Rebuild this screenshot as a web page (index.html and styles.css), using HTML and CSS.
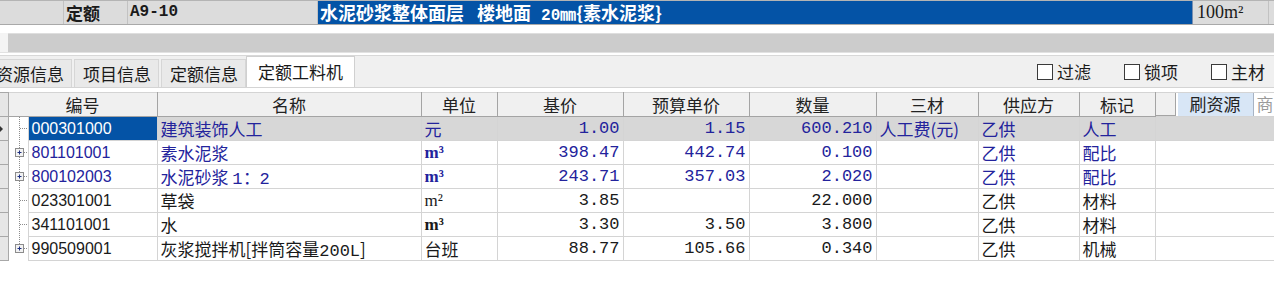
FILE: index.html
```html
<!DOCTYPE html>
<html lang="zh-CN">
<head>
    <meta charset="UTF-8">
    <title>定额工料机</title>
    <link rel="stylesheet" href="styles.css">
</head>
<body>
    <div class="quota-bar">
        <div class="qcell q-blank"></div>
        <div class="qcell q-label">定额</div>
        <div class="qcell q-code">A9-10</div>
        <div class="qcell q-name">水泥砂浆整体面层<span class="gap"></span>楼地面 <span class="mm">20㎜</span>{素水泥浆}</div>
        <div class="qcell q-unit">100m²</div>
        <div class="qcell q-rest"></div>
    </div>
    <div class="scroll-bar">
        <div class="grip"></div>
        <div class="track"></div>
    </div>
    <div class="tab-strip">
        <div class="tabs">
            <div class="tab">资源信息</div>
            <div class="tab">项目信息</div>
            <div class="tab">定额信息</div>
            <div class="tab active">定额工料机</div>
        </div>
        <div class="checks">
            <label class="check"><span class="box"></span>过滤</label>
            <label class="check"><span class="box"></span>锁项</label>
            <label class="check"><span class="box"></span>主材</label>
        </div>
    </div>
    <table class="grid">
        <colgroup>
            <col style="width:8px"><col style="width:20px"><col style="width:129px">
            <col style="width:264px"><col style="width:76px"><col style="width:126px">
            <col style="width:126px"><col style="width:127px"><col style="width:102px">
            <col style="width:101px"><col style="width:76px"><col style="width:119px">
        </colgroup>
        <thead>
            <tr>
                <th class="rh"></th>
                <th colspan="2">编号</th>
                <th>名称</th>
                <th>单位</th>
                <th class="split">基价</th>
                <th>预算单价</th>
                <th>数量</th>
                <th>三材</th>
                <th>供应方</th>
                <th>标记</th>
                <th class="tools">
                    <div class="tool-row">
                        <span class="stub"></span>
                        <span class="brush">刷资源</span>
                        <span class="more">商</span>
                    </div>
                </th>
            </tr>
        </thead>
        <tbody>
            <tr class="current blue">
                <td class="rh"><svg class="mark" width="4" height="8" viewBox="0 0 4 8"><path d="M0 1 L3 4 L0 7 Z" fill="#333"/></svg></td>
                <td class="tree"><svg width="20" height="23" viewBox="0 0 20 23"><path d="M10.5 0 V23 M11 11.5 H20" stroke="#8c8c8c" stroke-dasharray="1 1"/></svg></td>
                <td class="code sel">000301000</td>
                <td>建筑装饰人工</td>
                <td>元</td>
                <td class="num split">1.00</td>
                <td class="num">1.15</td>
                <td class="num">600.210</td>
                <td>人工费(元)</td>
                <td>乙供</td>
                <td>人工</td>
                <td></td>
            </tr>
            <tr class="blue">
                <td class="rh"></td>
                <td class="tree"><svg width="20" height="23" viewBox="0 0 20 23"><path d="M10.5 0 V23 M11 11.5 H20" stroke="#8c8c8c" stroke-dasharray="1 1"/><rect x="6.5" y="7.5" width="8" height="8" fill="#f2f2f2" stroke="#8c8c8c"/><path d="M8.5 11.5 H12.5 M10.5 9.5 V13.5" stroke="#1d2f80"/></svg></td>
                <td class="code">801101001</td>
                <td>素水泥浆</td>
                <td class="unit">m³</td>
                <td class="num split">398.47</td>
                <td class="num">442.74</td>
                <td class="num">0.100</td>
                <td></td>
                <td>乙供</td>
                <td>配比</td>
                <td></td>
            </tr>
            <tr class="blue">
                <td class="rh"></td>
                <td class="tree"><svg width="20" height="23" viewBox="0 0 20 23"><path d="M10.5 0 V23 M11 11.5 H20" stroke="#8c8c8c" stroke-dasharray="1 1"/><rect x="6.5" y="7.5" width="8" height="8" fill="#f2f2f2" stroke="#8c8c8c"/><path d="M8.5 11.5 H12.5 M10.5 9.5 V13.5" stroke="#1d2f80"/></svg></td>
                <td class="code">800102003</td>
                <td>水泥砂浆 <span class="ratio">1：2</span></td>
                <td class="unit">m³</td>
                <td class="num split">243.71</td>
                <td class="num">357.03</td>
                <td class="num">2.020</td>
                <td></td>
                <td>乙供</td>
                <td>配比</td>
                <td></td>
            </tr>
            <tr>
                <td class="rh"></td>
                <td class="tree"><svg width="20" height="23" viewBox="0 0 20 23"><path d="M10.5 0 V23 M11 11.5 H20" stroke="#8c8c8c" stroke-dasharray="1 1"/></svg></td>
                <td class="code">023301001</td>
                <td>草袋</td>
                <td class="unit thin">m²</td>
                <td class="num split">3.85</td>
                <td class="num"></td>
                <td class="num">22.000</td>
                <td></td>
                <td>乙供</td>
                <td>材料</td>
                <td></td>
            </tr>
            <tr>
                <td class="rh"></td>
                <td class="tree"><svg width="20" height="23" viewBox="0 0 20 23"><path d="M10.5 0 V23 M11 11.5 H20" stroke="#8c8c8c" stroke-dasharray="1 1"/></svg></td>
                <td class="code">341101001</td>
                <td>水</td>
                <td class="unit">m³</td>
                <td class="num split">3.30</td>
                <td class="num">3.50</td>
                <td class="num">3.800</td>
                <td></td>
                <td>乙供</td>
                <td>材料</td>
                <td></td>
            </tr>
            <tr>
                <td class="rh"></td>
                <td class="tree"><svg width="20" height="23" viewBox="0 0 20 23"><path d="M10.5 0 V11.5 M11 11.5 H20" stroke="#8c8c8c" stroke-dasharray="1 1"/><rect x="6.5" y="7.5" width="8" height="8" fill="#f2f2f2" stroke="#8c8c8c"/><path d="M8.5 11.5 H12.5 M10.5 9.5 V13.5" stroke="#1d2f80"/></svg></td>
                <td class="code">990509001</td>
                <td>灰浆搅拌机[拌筒容量<span class="ratio">200L</span>]</td>
                <td>台班</td>
                <td class="num split">88.77</td>
                <td class="num">105.66</td>
                <td class="num">0.340</td>
                <td></td>
                <td>乙供</td>
                <td>机械</td>
                <td></td>
            </tr>
        </tbody>
    </table>
</body>
</html>
```

FILE: styles.css
```css
body {
    margin: 0;
    background: #fff;
    font-family: "Noto Sans CJK SC", "Liberation Sans", sans-serif;
    font-size: 17px;
    color: #1a1a1a;
    width: 1274px;
    overflow: hidden;
}

/* quota title bar */
.quota-bar {
    display: flex;
    height: 23px;
    border-top: 1px solid #b4b4b4;
    border-bottom: 1px solid #a9a9a9;
    background: #dcdcdc;
}
.qcell {
    box-sizing: border-box;
    height: 23px;
    line-height: 23px;
    padding-left: 2px;
    border-right: 1px solid #c2c2c2;
    white-space: nowrap;
}
.q-blank { width: 64px; }
.q-label { width: 64px; font-weight: bold; }
.q-code {
    width: 190px;
    font-family: "Liberation Mono", monospace;
    font-weight: bold;
    font-size: 16px;
}
.q-name {
    width: 875px;
    background: #0453a6;
    color: #fff;
    font-weight: bold;
    font-size: 18px;
    border-right-color: #7a8fb0;
}
.q-name .gap { display: inline-block; width: 13px; }
.q-name .mm {
    font-family: "Liberation Mono", monospace;
    font-size: 16px;
    margin-left: 6px;
}
.q-unit { width: 76px; padding-left: 4px; font-family: "Liberation Serif", serif; font-size: 18px; }
.q-rest { flex: 1; border-right: none; }

/* grey scroll strip */
.scroll-bar {
    display: flex;
    margin-top: 8px;
    height: 19px;
    border-bottom: 1px solid #e2e2e2;
}
.grip { width: 8px; background: #f4f4f4; }
.track {
    flex: 1;
    background: #cccccc;
    border-top: 1px solid #dedede;
}

/* tabs + checkboxes */
.tab-strip {
    display: flex;
    justify-content: space-between;
    align-items: flex-end;
    margin-top: 2px;
    height: 31px;
    background: #f0f0f0;
    border-top: 1px solid #d8d8d8;
    border-bottom: 1px solid #d4d4d4;
}
.tabs {
    display: flex;
    align-items: flex-end;
    margin-left: -13px;
}
.tab {
    box-sizing: border-box;
    height: 28px;
    line-height: 27px;
    padding: 0 7px 0 8px;
    margin-right: 2px;
    background: #e9e9e9;
    border: 1px solid #d6d6d6;
    border-bottom: none;
}
.tab.active {
    height: 31px;
    line-height: 30px;
    margin-right: 0;
    margin-left: -2px;
    padding: 0 11px;
    background: #fff;
    border-color: #d0d0d0;
}
.checks {
    display: flex;
    gap: 33px;
    align-self: center;
    margin-right: 9px;
}
.check {
    display: flex;
    align-items: center;
    gap: 4px;
    line-height: 20px;
}
.box {
    width: 14px;
    height: 14px;
    border: 1px solid #3a3a3a;
    background: #fff;
}

/* grid */
.grid {
    margin-top: 4px;
    width: 1274px;
    table-layout: fixed;
    border-collapse: collapse;
    border-top: 1px solid #d4d4d4;
}
.grid th {
    height: 22px;
    padding: 0;
    font-weight: normal;
    background: #f0f0f0;
    border-right: 1px solid #a4a4a4;
    border-bottom: 1px solid #a4a4a4;
    line-height: 22px;
    color: #222;
}
.grid td {
    height: 23px;
    padding: 0 3px;
    line-height: 22px;
    border: 1px solid #d4d4d4;
    white-space: nowrap;
    overflow: hidden;
}
.grid td span { line-height: 1; }
.grid .rh {
    padding: 0;
    background: #e6e6e6;
    border: 1px solid #a8a8a8;
    border-left: none;
}
.grid td.tree {
    padding: 0;
    border-top: none;
    border-bottom: none;
    background: #fff;
}
.tree svg, .mark { display: block; }
.grid .split { border-left-color: #a9a9a9; }
.grid td.code {
    font-family: "Liberation Sans", sans-serif;
    font-size: 16px;
}
.grid td.num {
    text-align: right;
    font-family: "Liberation Mono", monospace;
    font-size: 17px;
}
.unit {
    font-family: "Liberation Serif", serif;
    font-weight: bold;
    font-size: 17px;
}
.unit.thin { font-weight: normal; }
.ratio {
    font-family: "Liberation Mono", monospace;
}

.grid tr.blue td { color: #23239c; }
.grid tr.current td { background: #d7d7d7; }
.grid tr.current td.tree { background: #fff; }
.grid tr.current td.rh { background: #e6e6e6; }
.grid tr.current td.sel {
    background: #0453a6;
    color: #fff;
}

/* header tool cell */
.grid th.tools {
    background: #fff;
    border-right: none;
    border-bottom: none;
}
.tool-row {
    display: flex;
    height: 23px;
}
.stub {
    width: 20px;
    background: #f0f0f0;
    border-right: 1px solid #a4a4a4;
    border-bottom: 1px solid #a4a4a4;
    box-sizing: border-box;
}
.brush {
    margin-left: 2px;
    width: 76px;
    background: #d8e6f6;
    border-right: 1px solid #a8b4c4;
    box-sizing: border-box;
}
.more {
    margin-left: 3px;
    color: #9a9a9a;
}
```
